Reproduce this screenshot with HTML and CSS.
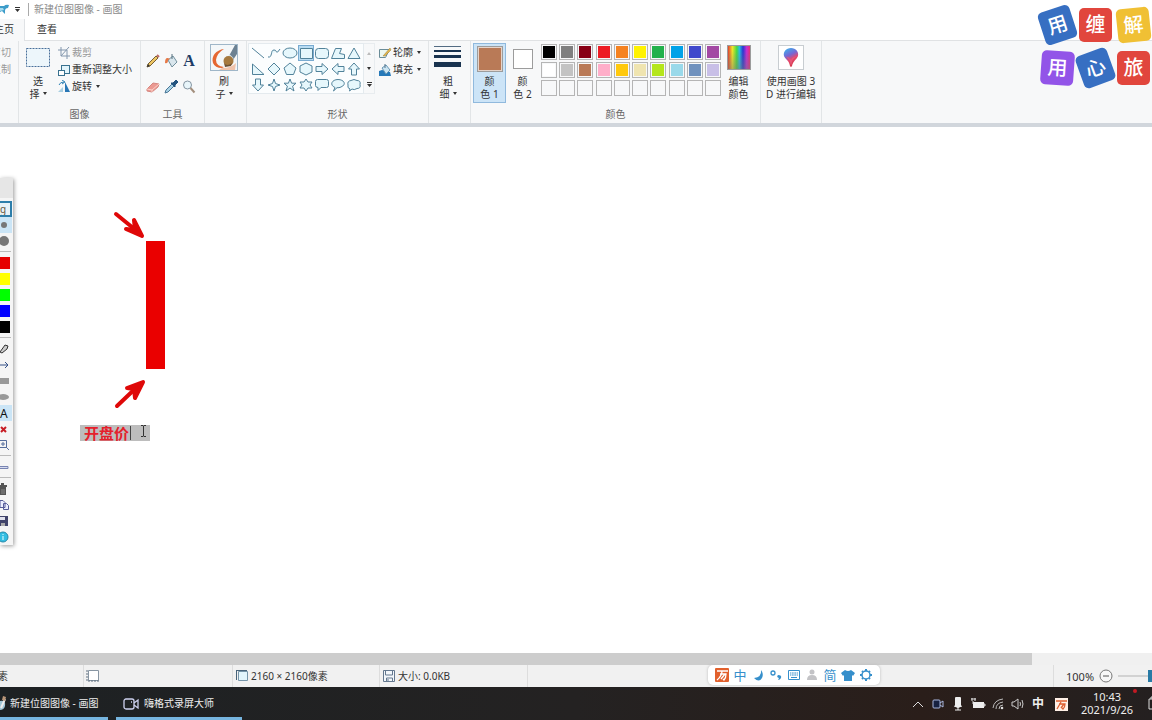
FILE: index.html
```html
<!DOCTYPE html>
<html lang="zh-CN">
<head>
<meta charset="utf-8">
<title>新建位图图像 - 画图</title>
<link rel="stylesheet" href="styles.css">
</head>
<body>
<div class="app">
  <header class="titlebar">
    <svg class="undo" width="11" height="16" viewBox="0 0 11 16"><path d="M0 4h4q2-2 5-1l-1 3q-3 0-3 3v3l-3-3-2 1z" fill="#3d9cc9"/><path d="M0 6h3l1 2-4 1z" fill="#a5dcf0"/></svg>
    <svg class="qat" width="5" height="6" viewBox="0 0 5 6"><path d="M0 0h5v1H0zM0 2h5L2.500 5z" fill="#333"/></svg>
    <span class="title">新建位图图像 - 画图</span>
  </header>
  <nav class="tabs">
    <button class="tab active">主页</button>
    <button class="tab">查看</button>
  </nav>
  <main class="ribbon">
    <section class="group g-clip">
      <div class="body"><button class="small off">剪切</button><button class="small off">复制</button></div>
    </section>
    <section class="group g-image">
      <div class="body">
        <button class="big">
          <svg width="26" height="28" viewBox="0 0 26 28"><rect x="1.500" y="5.500" width="23" height="18" fill="#edf6fb" stroke="#486f9a" stroke-dasharray="2 1"/></svg>
          <span>选<br>择<i class="arr"></i></span>
        </button>
        <div class="stack">
          <button class="small off"><svg width="14" height="14" viewBox="0 0 14 14"><path d="M4 1v9h9M1 4h9v9M4 10l8-9" fill="none" stroke="#8296ad"/></svg>裁剪</button>
          <button class="small"><svg width="14" height="14" viewBox="0 0 14 14"><rect x="4.500" y="2.500" width="8" height="8" fill="#e2f4fb" stroke="#38718f"/><rect x="1.500" y="7.500" width="6" height="5" fill="#fff" stroke="#38718f"/></svg>重新调整大小</button>
          <button class="small"><svg width="14" height="14" viewBox="0 0 14 14"><path d="M8 2v10h5z" fill="#2876b5"/><path d="M6 7v5H1z" fill="#a9cfe2"/><path d="M2 5q1-3 5-3M5 0l3 2-3 2" fill="none" stroke="#3183b6"/></svg>旋转<i class="arr"></i></button>
        </div>
      </div>
      <h2>图像</h2>
    </section>
    <section class="group g-tools">
      <div class="body">
        <button class="tool" aria-label="铅笔"><svg width="16" height="16" viewBox="0 0 16 16"><path d="M2 14l1-3 8-8 2 2-8 8z" fill="#edc563" stroke="#786036"/><path d="M2 14l1-3 2 2z" fill="#333"/><path d="M12 2l2 2" stroke="#ba6964" stroke-width="2"/></svg></button>
        <button class="tool" aria-label="填充"><svg width="16" height="16" viewBox="0 0 16 16"><path d="M5 7l5-4 4 6-5 5z" fill="#d9e6ed" stroke="#718f9d"/><path d="M9 6V1" stroke="#57717f"/><path d="M7 6Q2 3 2 10q3 1 3-3z" fill="#e67846"/></svg></button>
        <button class="tool letter" aria-label="文本">A</button>
        <button class="tool" aria-label="橡皮擦"><svg width="16" height="16" viewBox="0 0 16 16"><path d="M2 10l6-6 6 1-1 3-6 5-5-1z" fill="#eb9992" stroke="#d58780"/><path d="M2 10l5 1 7-6M7 11v2" fill="none" stroke="#fbd1c9"/></svg></button>
        <button class="tool" aria-label="颜色选取器"><svg width="16" height="16" viewBox="0 0 16 16"><path d="M2 14l1-3 6-6 2 2-6 6z" fill="#aad3e5" stroke="#4b7798"/><path d="M8 4l2 0 3-3 2 2-3 3 0 2z" fill="#24547f" stroke="#24547f"/></svg></button>
        <button class="tool" aria-label="放大镜"><svg width="16" height="16" viewBox="0 0 16 16"><circle cx="6.500" cy="6" r="4" fill="#e8f5fa" stroke="#8595a2"/><path d="M9.500 9l4 4.500" stroke="#a38f7d" stroke-width="2"/></svg></button>
      </div>
      <h2>工具</h2>
    </section>
    <section class="group g-brush">
      <div class="body">
        <button class="big">
          <svg width="28" height="28" viewBox="0 0 28 28"><rect x=".5" y="1.500" width="27" height="26" fill="#f4f7f9" stroke="#9fb6c8"/><path d="M14 6C6 7 1 13 3 20q2 5 9 5l2-1q-8-1-8-7 1-7 8-11" fill="#e56732"/><path d="M12 25q9 0 14-5l-1 7H9z" fill="#f0c3ab"/><path d="M19 13l6-11h2v9l-4 6z" fill="#6c8192"/><path d="M19 12l4 4" stroke="#dce5ea" stroke-width="2"/><ellipse cx="18.500" cy="18" rx="5" ry="5" fill="#a5793f"/><path d="M14 20q3 4 8 0l-1 3-6 1z" fill="#6d5135"/></svg>
          <span>刷<br>子<i class="arr"></i></span>
        </button>
      </div>
    </section>
    <section class="group g-shapes">
      <div class="body">
        <div class="gallery">
          <button aria-label="直线"><svg viewBox="0 0 16 16"><path d="M2 3l12 10"/></svg></button>
          <button aria-label="曲线"><svg viewBox="0 0 16 16"><path d="M2 12C7 13 4 5 8 5s1 6 6-1"/></svg></button>
          <button aria-label="椭圆"><svg viewBox="0 0 16 16"><ellipse cx="8" cy="8" rx="7" ry="5"/></svg></button>
          <button class="picked" aria-label="矩形"><svg viewBox="0 0 16 16"><path d="M2.500 3.500h12v10h-12z"/></svg></button>
          <button aria-label="圆角矩形"><svg viewBox="0 0 16 16"><rect x="1.500" y="3.500" width="13" height="10" rx="3"/></svg></button>
          <button aria-label="多边形"><svg viewBox="0 0 16 16"><path d="M1.500 13.500l4-10h6l-2 5 5 1v4z"/></svg></button>
          <button aria-label="三角形"><svg viewBox="0 0 16 16"><path d="M8 3l6 10.500H2z"/></svg></button>
          <button aria-label="直角三角形"><svg viewBox="0 0 16 16"><path d="M2.500 3v10.500H14z"/></svg></button>
          <button aria-label="菱形"><svg viewBox="0 0 16 16"><path d="M8 2l6 6-6 6-6-6z"/></svg></button>
          <button aria-label="五边形"><svg viewBox="0 0 16 16"><path d="M8 2l6 5-2.500 6.500h-7L2 7z"/></svg></button>
          <button aria-label="六边形"><svg viewBox="0 0 16 16"><path d="M8 2l6 3v6l-6 3-6-3V5z"/></svg></button>
          <button aria-label="右箭头"><svg viewBox="0 0 16 16"><path d="M2 5.500h6V2.500L14 8l-6 5.500v-3H2z"/></svg></button>
          <button aria-label="左箭头"><svg viewBox="0 0 16 16"><path d="M14 5.500H8V2.500L2 8l6 5.500v-3h6z"/></svg></button>
          <button aria-label="上箭头"><svg viewBox="0 0 16 16"><path d="M5.500 14V8h-3L8 2l5.500 6h-3v6z"/></svg></button>
          <button aria-label="下箭头"><svg viewBox="0 0 16 16"><path d="M5.500 2v6h-3L8 14l5.500-6h-3V2z"/></svg></button>
          <button aria-label="四角星"><svg viewBox="0 0 16 16"><path d="M8 2l1.500 4.500L14 8 9.500 9.500 8 14 6.500 9.500 2 8l4.500-1.500z"/></svg></button>
          <button aria-label="五角星"><svg viewBox="0 0 16 16"><path d="M8 2l1.600 4.200H14l-3.400 3L12 14l-4-3-4 3 1.400-4.800L2 6.200h4.400z"/></svg></button>
          <button aria-label="六角星"><svg viewBox="0 0 16 16"><path d="M8 2l2 3h4l-2 3 2 3h-4l-2 3-2-3H2l2-3-2-3h4z"/></svg></button>
          <button aria-label="圆角标注"><svg viewBox="0 0 16 16"><path d="M3.500 2.500h9q2 0 2 2v4q0 2-2 2H7l-3 3v-3q-2.500 0-2.500-2v-4q0-2 2-2z"/></svg></button>
          <button aria-label="椭圆标注"><svg viewBox="0 0 16 16"><path d="M5 10.500C-1 8 2 2.500 8 2.500s9 5 3 7.500q-2 1-4 .7L3.500 14z"/></svg></button>
          <button aria-label="云形标注"><svg viewBox="0 0 16 16"><path d="M4 12Q1 11 2 8 1 4 5 3.500q3-2 6 0 4 0 3 4 1 4-3 4-3 2-5 .5L3.500 14z"/></svg></button>
        </div>
        <div class="scroller"><i class="arr up"></i><i class="arr"></i><svg width="5" height="6" viewBox="0 0 5 6"><path d="M0 0h5v1H0zM0 2h5L2.500 5z" fill="#333"/></svg></div>
        <div class="stack">
          <button class="small"><svg width="14" height="14" viewBox="0 0 14 14"><path d="M1.500 3.500h10l-4 8h-6z" fill="#edf7ef" stroke="#6a8c98"/><path d="M5 10l7-8 1 2-6 6z" fill="#e4b64b" stroke="#9b8138" stroke-width=".5"/></svg>轮廓<i class="arr"></i></button>
          <button class="small"><svg width="14" height="14" viewBox="0 0 14 14"><path d="M1 8l3-1 8 2 1 4H1z" fill="#2679b9"/><path d="M4 5l4-3 4 5-4 4z" fill="#cce5f2" stroke="#6796b5"/><path d="M7 5V1" stroke="#57758a"/></svg>填充<i class="arr"></i></button>
        </div>
      </div>
      <h2>形状</h2>
    </section>
    <section class="group g-size">
      <div class="body">
        <button class="big">
          <svg width="28" height="28" viewBox="0 0 28 28"><path d="M0 3h27v1H0z" fill="#536b82"/><path d="M0 7h27v2H0zM0 12h27v3H0zM0 19h27v5H0z" fill="#19334f"/></svg>
          <span>粗<br>细<i class="arr"></i></span>
        </button>
      </div>
    </section>
    <section class="group g-colors">
      <div class="body">
        <button class="big color-one"><b class="chip brown"></b><span>颜<br>色 1</span></button>
        <button class="big color-two"><b class="chip white"></b><span>颜<br>色 2</span></button>
        <div class="palette">
          <button class="c-black" aria-label="黑色"></button><button class="c-gray" aria-label="灰色"></button><button class="c-maroon" aria-label="深红色"></button><button class="c-red" aria-label="红色"></button><button class="c-orange" aria-label="橙色"></button><button class="c-yellow" aria-label="黄色"></button><button class="c-green" aria-label="绿色"></button><button class="c-azure" aria-label="青绿色"></button><button class="c-indigo" aria-label="靛青色"></button><button class="c-purple" aria-label="紫色"></button>
          <button class="c-white" aria-label="白色"></button><button class="c-silver" aria-label="浅灰色"></button><button class="c-brown" aria-label="褐色"></button><button class="c-rose" aria-label="玫瑰色"></button><button class="c-gold" aria-label="金色"></button><button class="c-cream" aria-label="浅黄色"></button><button class="c-lime" aria-label="酸橙色"></button><button class="c-sky" aria-label="淡青绿色"></button><button class="c-slate" aria-label="蓝灰色"></button><button class="c-lavender" aria-label="淡紫色"></button>
          <button aria-label="自定义 1"></button><button aria-label="自定义 2"></button><button aria-label="自定义 3"></button><button aria-label="自定义 4"></button><button aria-label="自定义 5"></button><button aria-label="自定义 6"></button><button aria-label="自定义 7"></button><button aria-label="自定义 8"></button><button aria-label="自定义 9"></button><button aria-label="自定义 10"></button>
        </div>
        <button class="big edit"><b class="chip rainbow"></b><span>编辑<br>颜色</span></button>
      </div>
      <h2>颜色</h2>
    </section>
    <section class="group g-3d">
      <div class="body">
        <button class="big">
          <svg width="26" height="28" viewBox="0 0 26 28"><defs><linearGradient id="drop" x1="0" y1="0" x2=".4" y2="1"><stop offset="0" stop-color="#35bdf0"/><stop offset=".45" stop-color="#7468d6"/><stop offset=".7" stop-color="#e5486d"/><stop offset="1" stop-color="#d43a4c"/></linearGradient></defs><rect x=".5" y="2.500" width="25" height="24" fill="#fff" stroke="#c8cdd1"/><path d="M13 5c-5 0-8 4-7 8 1 3 5 4 6 10 0 1 2 1 2 0 1-5 5-7 6-10 1-4-2-8-7-8z" fill="url(#drop)"/><path d="M7 13q5 2 6 10 1-8 6-10-5 1-6 4-2-3-6-4z" fill="#e85878"/></svg>
          <span>使用画图 3<br>D 进行编辑</span>
        </button>
      </div>
    </section>
  </main>

  <section class="canvas">
    <svg class="drawing" width="180" height="290" viewBox="0 0 180 290">
      <path d="M146 114h19v128h-19z" fill="#ea0000"/>
      <g stroke="#df0808" stroke-width="4" stroke-linecap="round" stroke-linejoin="round" fill="#df0808"><path d="M116 87l22 18"/><path d="M126 102l16 7-8-16 1 10z"/><path d="M117 279l21-20"/><path d="M127 261l16-6-8 16-1-9z"/></g>
    </svg>
    <input class="note" value="开盘价" aria-label="文字标注">
    <i class="caret"></i>
    <svg class="ibeam" width="7" height="12" viewBox="0 0 7 12"><path d="M1 .5h2l.5 1 .5-1h2M3.500 1v10M1 11.500h2l.5-1 .5 1h2" fill="none" stroke="#333"/></svg>
  </section>

  <div class="hscroll"><div class="thumb"></div></div>
  <footer class="status">
    <div class="cell c1">像素</div>
    <div class="cell c2"><svg width="14" height="14" viewBox="0 0 14 14"><path d="M2.500 1.500h10v10h-10z" fill="#fff" stroke="#8795a2"/><path d="M1 1v11h12" fill="none" stroke="#617080" stroke-dasharray="2 1"/></svg></div>
    <div class="cell c3"><svg width="14" height="14" viewBox="0 0 14 14"><path d="M3.500 2.500h9v9h-9z" fill="#e2f5fc" stroke="#7695a9"/><path d="M1 1.500h11M1.500 1v10" stroke="#48647a"/></svg>2160 × 2160像素</div>
    <div class="cell c4"><svg width="14" height="14" viewBox="0 0 14 14"><path d="M1.500 1.500h11v11h-11z" fill="#f3f7fb" stroke="#64788f"/><path d="M3.500 2v4h7V2M4.500 12V9h6v3M6 10v2" fill="none" stroke="#64788f"/></svg>大小: 0.0KB</div>
    <div class="cell zoom"><span>100%</span><button aria-label="缩小"><svg width="14" height="14" viewBox="0 0 14 14"><circle cx="7" cy="7" r="6" fill="#f7f7f7" stroke="#777"/><path d="M4 7h6" stroke="#555"/></svg></button><input type="range" aria-label="缩放"></div>
  </footer>
  <footer class="taskbar">
    <button class="task t1"><svg width="10" height="18" viewBox="0 0 10 18"><path d="M0 6q6-1 5 5-1 4-5 4z" fill="#9fc5d6"/><path d="M1 13L5 4" stroke="#eee" stroke-width="2"/><path d="M3 1l3 1-1 4-3-1z" fill="#ba9678"/></svg>新建位图图像 - 画图</button>
    <button class="task t2"><svg width="16" height="14" viewBox="0 0 16 14"><rect x="1" y="2" width="10" height="10" rx="2" fill="none" stroke="#ced2ef" stroke-width="1.300"/><path d="M11 6l4-3v8l-4-3M8 5h1" fill="none" stroke="#ced2ef" stroke-width="1.300"/></svg>嗨格式录屏大师</button>
    <div class="tray">
      <svg viewBox="0 0 16 16"><path d="M3 11l5-5 5 5" fill="none" stroke="#ddd"/></svg>
      <svg viewBox="0 0 16 16"><rect x="3" y="4" width="7" height="8" rx="1" fill="#172241" stroke="#a9b7df"/><path d="M10 7l3-2v6l-3-2" fill="none" stroke="#a9b7df"/></svg>
      <svg viewBox="0 0 16 16"><rect x="5" y="1" width="6" height="10" rx="1" fill="#eee"/><path d="M4 10q4 3 8 0M8 11v3M5 14h6" fill="none" stroke="#eee"/></svg>
      <svg viewBox="0 0 16 16"><path d="M3 6h11v6H3z" fill="#eee"/><path d="M14 8h1v2h-1zM1 3h5M2 2v3M5 2v3M3 5v3" fill="none" stroke="#ddd"/></svg>
      <svg viewBox="0 0 16 16"><path d="M3 12Q4 4 13 3M6 13q0-6 7-7M9 13q0-4 4-4" fill="none" stroke="#bbb"/><circle cx="12" cy="12" r="1.300" fill="#ddd"/></svg>
      <svg viewBox="0 0 16 16"><path d="M2 6h2l4-3v10l-4-3H2zM10 6q1 2 0 4M12 4q2 4 0 8" fill="none" stroke="#ccc"/></svg>
      <b>中</b>
      <svg class="wan" viewBox="0 0 16 16"><rect x="2" y="2" width="13" height="13" fill="#fff0e6"/><path d="M3 5h11M6 8h6q0 3-2 5l-1-1M8 6l-4 7M11 8l-3 4" fill="none" stroke="#dd6032" stroke-width="1.300"/></svg>
    </div>
    <div class="clock">10:43<br>2021/9/26</div>
    <i class="dot"></i>
    <svg class="notice" width="4" height="16" viewBox="0 0 4 16"><path d="M4 3H1v10h3M4 1H3v2" fill="none" stroke="#ddd"/></svg>
  </footer>
</div>

<aside class="pens">
  <div class="row label">g</div>
  <div class="row on"><i class="d small-dot"></i></div>
  <div class="row"><i class="d"></i></div>
  <hr>
  <div class="row"><i class="ink c-red2"></i></div><div class="row"><i class="ink c-yel2"></i></div><div class="row"><i class="ink c-grn2"></i></div><div class="row"><i class="ink c-blu2"></i></div><div class="row"><i class="ink c-black"></i></div>
  <hr>
  <div class="row"><svg viewBox="0 0 10 16"><path d="M0 11l5-7 3 1-1 3-5 4-2-1z" fill="#ccc" stroke="#333"/></svg></div>
  <div class="row"><svg viewBox="0 0 10 16"><path d="M0 8h8M5 5l3 3-3 3" fill="none" stroke="#345087"/></svg></div>
  <div class="row"><svg viewBox="0 0 10 16"><path d="M0 5h9v6H0z" fill="#999"/></svg></div>
  <div class="row"><svg viewBox="0 0 10 16"><ellipse cx="3" cy="8" rx="6" ry="3" fill="#999"/></svg></div>
  <div class="row on letter-a">A</div>
  <div class="row"><svg viewBox="0 0 10 16"><path d="M1 6l5 5M6 6l-5 5" stroke="#c71d24" stroke-width="2"/></svg></div>
  <div class="row"><svg viewBox="0 0 10 16"><path d="M0 3.500h6.500v7H0M6 10l3 3M1 7h4M3 5v4" fill="none" stroke="#566e9d"/></svg></div>
  <hr>
  <div class="row"><svg viewBox="0 0 10 16"><path d="M0 7.500h8v2H0" fill="#d6dbf0" stroke="#7884b1"/></svg></div>
  <hr>
  <div class="row"><svg viewBox="0 0 10 16"><path d="M0 4h7v2H0zM0 6h6v8H0zM1 2h3v2H1z" fill="#555"/><path d="M2 8v5M4 8v5" stroke="#888"/></svg></div>
  <div class="row"><svg viewBox="0 0 10 16"><path d="M0 3.500h3l2 2v5H0zM3.500 6.500h3l2 2v4h-5z" fill="#ebedff" stroke="#555b99"/></svg></div>
  <div class="row"><svg viewBox="0 0 10 16"><path d="M0 3h8v10H0z" fill="#41446b"/><path d="M0 4h5v3H0z" fill="#e1e2ee"/><path d="M1 10h4v3H1z" fill="#aaa"/></svg></div>
  <div class="row"><svg viewBox="0 0 10 16"><circle cx="3" cy="8" r="5" fill="#32bde2" stroke="#2389aa"/><path d="M3 5v1M3 7v4" stroke="#e8ffff"/></svg></div>
</aside>

<div class="brand">
  <b class="tile blue left">用</b><b class="tile red">缠</b><b class="tile gold">解</b>
  <b class="tile violet">用</b><b class="tile blue mid">心</b><b class="tile red">旅</b>
</div>

<div class="ime">
  <svg viewBox="0 0 16 16"><rect x="1" y="1" width="14" height="14" rx="1" fill="#e1602c"/><path d="M3 4h11M6 7h6q0 4-2 6l-1-1M8 4q0 5-5 9M11 7l-4 5" fill="none" stroke="#fff" stroke-width="1.300"/></svg>
  <span>中</span>
  <svg viewBox="0 0 16 16"><path d="M11 3q1 7-7 8 5 5 8 0 2-4-1-8" fill="#368fcb"/></svg>
  <svg viewBox="0 0 16 16"><circle cx="5" cy="6" r="2" fill="none" stroke="#368fcb" stroke-width="1.300"/><path d="M10 8q4 0 3 3-1 2-3 2l1-2q-3-1-1-3" fill="#368fcb"/></svg>
  <svg viewBox="0 0 16 16"><path d="M2.500 3.500h11v9h-11zM4 6h8M4 8h8M5 10.500h6" fill="none" stroke="#368fcb"/><path d="M5.500 4v5M8 4v5M10.500 4v5" stroke="#fff" stroke-width=".6"/></svg>
  <svg viewBox="0 0 16 16"><circle cx="8" cy="5" r="2.500" fill="#c3c3c6"/><path d="M3 13q0-5 5-5t5 5z" fill="#c3c3c6"/></svg>
  <span>简</span>
  <svg viewBox="0 0 16 16"><path d="M5 3q3 2 6 0l4 3-2 3-1-1v6H4V8L3 9 1 6z" fill="#368fcb"/></svg>
  <svg viewBox="0 0 16 16"><circle cx="8" cy="8" r="4" fill="none" stroke="#368fcb" stroke-width="1.500"/><path d="M8 2v2M8 12v2M2 8h2M12 8h2M4 4l1 1M11 11l1 1M4 12l1-1M11 5l1-1" stroke="#368fcb" stroke-width="2"/></svg>
</div>
</body>
</html>
```
FILE: styles.css
```css
* { box-sizing: border-box; }
body { margin: 0; overflow: hidden; font: 10px/13px "Noto Sans", "Noto Sans CJK SC", sans-serif; color: #333; background: #fff; }
button, input { font: inherit; color: inherit; border: 0; padding: 0; margin: 0; background: none; }
svg { flex: none; display: block; }
.app { display: flex; flex-direction: column; height: 100vh; }

.titlebar { display: flex; align-items: center; height: 19px; color: #8b8b8b; }
.qat { margin-left: 4px; }
.title { margin-left: 8px; padding-left: 5px; border-left: 1px solid #aaa; white-space: nowrap; }
.tabs { display: flex; height: 22px; border-bottom: 1px solid #e0e2e4; }
.tab { width: 44px; height: 20px; white-space: nowrap; }
.tab.active { display: flex; justify-content: flex-end; align-items: center; width: 25px; height: 22px; padding: 0 10px 2px 0; overflow: hidden; background: #f7f8f9; border-right: 1px solid #dfe2e5; }

.ribbon { display: flex; flex: none; height: 86px; background: #f7f8f9; border-bottom: 4px solid #d1d6dc; }
.group { display: flex; flex-direction: column; justify-content: space-between; flex: none; border-right: 1px solid #e2e5e7; }
.group h2 { margin: 0 0 2px; font: inherit; text-align: center; color: #666; }
.body { display: flex; height: 62px; padding-top: 2px; }
.g-clip { width: 19px; overflow: hidden; }
.g-clip .body { flex-direction: column; align-items: flex-end; padding: 3px 7px 0 0; }
.g-image { width: 122px; }
.g-tools { width: 64px; }
.g-brush, .g-size { width: 42px; }
.g-shapes { width: 182px; }
.g-colors { width: 290px; }
.g-3d { width: 61px; }
.big { display: flex; flex-direction: column; align-items: center; width: 100%; height: 60px; white-space: nowrap; }
.big span { margin-top: 4px; }
.g-image .big { width: 38px; }
.g-image .stack { padding-top: 1px; }
.small { display: flex; align-items: center; gap: 1px; height: 17px; white-space: nowrap; }
.off { color: #9a9a9a; }
.arr { display: inline-block; flex: none; border: 2px solid transparent; border-top: 3px solid #333; border-bottom: 0; margin-left: 3px; vertical-align: 3px; }
.g-tools .body { display: grid; grid-template-columns: repeat(3, 18px); grid-auto-rows: 26px; padding: 7px 0 0 3px; }
.g-brush .big, .g-size .big { width: 38px; }
.tool { display: grid; place-items: center; }
.letter { font: bold 16px "Liberation Serif", serif; color: #1d3c66; }

.g-shapes .body { padding: 2px 0 0 1px; }
.gallery { display: grid; grid-template-columns: repeat(7, 16px); grid-auto-rows: 16px; width: 116px; height: 51px; padding: 1px; border: 1px solid #e4eaee; background: #fbfdfe; }
.gallery svg { width: 16px; height: 16px; fill: #e6f7fc; stroke: #51829a; }
.picked { background: #b9dcf2; outline: 1px solid #79abd1; outline-offset: -1px; }
.scroller { display: flex; flex-direction: column; justify-content: space-between; align-items: center; width: 11px; height: 51px; padding: 8px 0 5px; border: 1px solid #e8ecef; border-left: 0; }
.scroller .arr { margin: 0; }
.arr.up { border-top: 0; border-bottom: 3px solid #bbb; }
.g-shapes .stack { padding: 1px 0 0 3px; }

.color-one, .color-two, .edit { width: 33px; }
.g-colors .body { padding-left: 2px; }
.color-one { background: #cce4f7; outline: 1px solid #90b9dd; outline-offset: -1px; }
.chip { display: block; border: 1px solid #9c9c9c; }
.brown { width: 26px; height: 26px; margin: 3px 0 -1px; background: #b97a57; box-shadow: inset 0 0 0 1px #e5d4cb; }
.white { width: 20px; height: 20px; margin: 6px 0 2px; background: #fff; }
.rainbow { width: 24px; height: 25px; margin: 2px 0 1px; background: linear-gradient(transparent 20%, #7777), linear-gradient(90deg, #e23e31, #eee52a 20%, #45d745 40%, #29bce1 52%, #2a36d1 68%, #c62fd1 85%, #e72e70); }
.palette { display: grid; grid-template-columns: repeat(10, 16px); grid-auto-rows: 16px; justify-content: space-between; align-content: start; row-gap: 2px; flex: none; width: 180px; margin: 1px 1px 0 2px; }
.palette button { border: 1px solid #b5b5b5; box-shadow: inset 0 0 0 1px #f7f8f9; }
.c-black { background: #000; } .c-gray { background: #7f7f7f; } .c-maroon { background: #880015; } .c-red { background: #ed1c24; } .c-orange { background: #f58220; }
.c-yellow { background: #fff200; } .c-green { background: #22b14c; } .c-azure { background: #00a2e8; } .c-indigo { background: #3f48cc; } .c-purple { background: #a349a4; }
.c-white { background: #fff; } .c-silver { background: #c3c3c3; } .c-brown { background: #b97a57; } .c-rose { background: #ffaec9; } .c-gold { background: #ffc90e; }
.c-cream { background: #efe4b0; } .c-lime { background: #b5e61d; } .c-sky { background: #99d9ea; } .c-slate { background: #7092be; } .c-lavender { background: #c8bfe7; }

.canvas { position: relative; flex: 1; min-height: 0; overflow: hidden; background: #fff; }
.note { position: absolute; left: 80px; top: 298px; width: 70px; height: 16px; padding: 0 0 1px 4px; background: #bdbdbd; color: #e5202b; font: bold 15px/15px "Noto Sans CJK SC", sans-serif; }
.caret { position: absolute; left: 130px; top: 299px; width: 1px; height: 14px; background: #444; }
.ibeam { position: absolute; left: 140px; top: 298px; }
.drawing { position: absolute; left: 0; top: 0; }

.hscroll { flex: none; height: 12px; background: #f0f0f0; }
.thumb { width: 90%; height: 12px; max-width: 1032px; background: #cdcdcd; }
.status { display: flex; flex: none; height: 22px; background: #f1f1f1; }
.cell { display: flex; align-items: center; gap: 2px; padding-left: 2px; border-right: 1px solid #ddd; white-space: nowrap; }
.c1 { justify-content: flex-end; width: 84px; padding-right: 75px; }
.c2 { width: 149px; }
.c3 { width: 147px; }
.c4 { width: 148px; }
.zoom { gap: 5px; width: 99px; margin-left: auto; padding-left: 12px; border: 0; border-left: 1px solid #ddd; overflow: hidden; }
.zoom span { font-size: 11px; }
.zoom input { flex: none; width: 66px; height: 14px; appearance: none; }
.zoom input::-webkit-slider-runnable-track { height: 2px; background: #d2d2d2; }
.zoom input::-webkit-slider-thumb { appearance: none; width: 6px; height: 12px; margin-top: -5px; background: #287aa5; }

.taskbar { display: flex; flex: none; height: 33px; color: #eee; background: linear-gradient(90deg, #1d2123, #242222 50%, #2a1e1a 80%, #242020); }
.task { display: flex; align-items: center; border-bottom: 3px solid #76b5df; white-space: nowrap; padding-top: 3px; }
.t1 { width: 108px; margin-right: 8px; }
.t2 { width: 126px; gap: 5px; padding-left: 7px; }
.tray { display: flex; align-items: center; gap: 4px; margin-left: auto; }
.tray svg { width: 16px; height: 16px; }
.tray b { width: 16px; font-size: 12px; text-align: center; }
.tray .wan { margin-left: 3px; }
.clock { margin-left: 8px; width: 60px; padding-top: 3px; font-size: 11px; text-align: center; }
.dot { width: 4px; height: 4px; margin-top: 2px; border-radius: 50%; background: #c31923; margin-right: 11px; margin-left: -4px; }
.notice { margin: 9px 0 0; }

.pens { position: absolute; left: 0; top: 178px; width: 13px; padding-top: 23px; background: linear-gradient(#e6e6e6 20px, #f5f5f5 20px); box-shadow: 1px 1px 4px #999; }
.row { display: flex; align-items: center; width: 12px; height: 16px; overflow: hidden; }
.row svg { width: 10px; height: 16px; }
.pens hr { height: 1px; margin: 2px 2px 3px 0; border: 0; background: #bbb; }
.on { background: #cbe5f6; }
.label { border: 2px solid #2e7eaa; border-left: 0; background: #e8f2f7; color: #65543c; }
.d { flex: none; width: 10px; height: 10px; margin-left: -1px; border-radius: 50%; background: #777; }
.small-dot { width: 6px; height: 6px; margin-left: 1px; }
.ink { width: 10px; height: 12px; }
.c-red2 { background: #e60000; } .c-yel2 { background: #ff0; } .c-grn2 { background: #0f0; } .c-blu2 { background: #00f; }
.letter-a { color: #111; font-size: 12px; }

.brand { position: absolute; top: 8px; left: calc(100% - 111px); display: grid; grid-template-columns: repeat(3, 33px); gap: 9px 5px; width: 111px; }
.tile { display: grid; place-items: center; height: 34px; border-radius: 5px; color: #fff; font-size: 20px; line-height: 28px; font-weight: 500; }
.blue { background: #376fc2; }
.red { background: #e1463d; }
.gold { background: #f0c034; transform: rotate(-6deg); }
.violet { background: #9254e8; transform: rotate(4deg); }
.left { transform: rotate(-18deg); }
.mid { transform: rotate(-20deg); }

.ime { position: absolute; left: calc(50% + 132px); bottom: 35px; display: flex; align-items: center; gap: 2px; height: 20px; padding: 0 6px; background: #fff; border-radius: 5px; box-shadow: 0 0 3px #bbb; }
.ime svg { width: 16px; height: 16px; }
.ime span { width: 16px; color: #368fcb; font-size: 13px; line-height: 16px; text-align: center; }
```
